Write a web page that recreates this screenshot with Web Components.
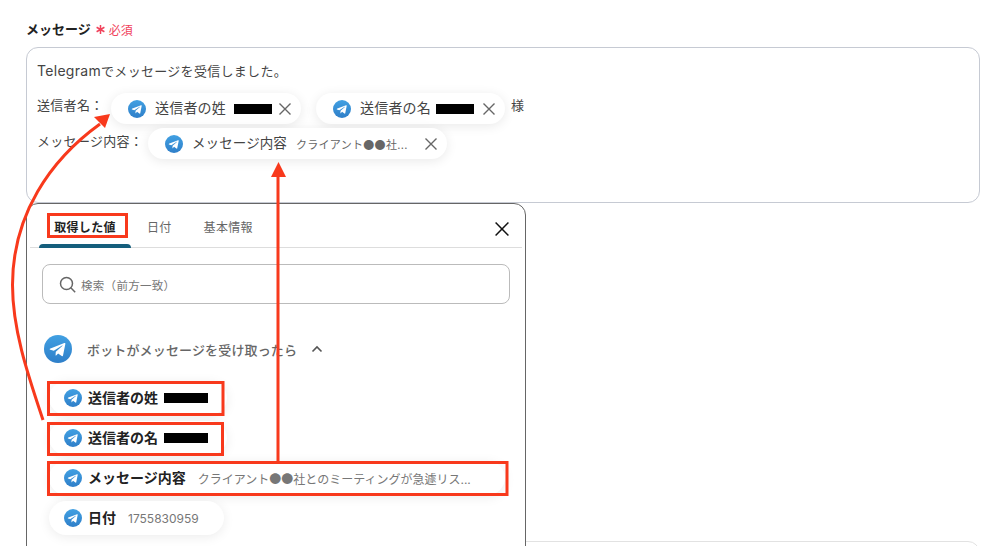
<!DOCTYPE html>
<html lang="ja">
<head>
<meta charset="utf-8">
<title>メッセージ</title>
<style>
  html, body { margin: 0; height: 546px; overflow: hidden; background: #fff; }
  body { font-family: Inter, "Noto Sans CJK JP", sans-serif; color: #333; }
</style>
</head>
<body>
<message-form></message-form>
<script>
const FONT = `Inter, "Noto Sans CJK JP", sans-serif`;

class TgIcon extends HTMLElement {
  constructor() {
    super();
    const size = this.getAttribute('size') || 18;
    const id = 'g' + Math.random().toString(36).slice(2, 8);
    this.attachShadow({ mode: 'open' });
    this.shadowRoot.innerHTML = `
      <style>:host { display: block; width: ${size}px; height: ${size}px; flex: none; } svg { display: block; }</style>
      <svg width="${size}" height="${size}" viewBox="0 0 24 24">
        <defs><linearGradient id="${id}" x1="0" y1="0" x2="0" y2="1"><stop offset="0" stop-color="#41a0e2"/><stop offset="1" stop-color="#2f7fc9"/></linearGradient></defs>
        <circle cx="12" cy="12" r="12" fill="url(#${id})"/>
        <path d="M5 11.8l12.4-4.9c.6-.2 1.1.1.9.9l-2 9.8c-.1.7-.6.8-1.100.5l-3.100-2.300-1.500 1.500c-.2.2-.3.3-.7.3l.2-3.200 5.800-5.200c.3-.2-.1-.4-.4-.2l-7.100 4.500-3-.9c-.7-.2-.7-.7 .1-1z" fill="#fff"/>
      </svg>`;
  }
}

class CloseIcon extends HTMLElement {
  constructor() {
    super();
    const size = this.getAttribute('size') || 12;
    const color = this.getAttribute('color') || '#666';
    const w = this.getAttribute('stroke') || 1.4;
    this.attachShadow({ mode: 'open' });
    this.shadowRoot.innerHTML = `
      <style>:host { display: block; width: ${size}px; height: ${size}px; flex: none; } svg { display: block; }</style>
      <svg width="${size}" height="${size}" viewBox="0 0 12 12"><path d="M.5.5l11 11M11.500.5l-11 11" stroke="${color}" stroke-width="${w}" fill="none"/></svg>`;
  }
}

class RedactBar extends HTMLElement {
  constructor() {
    super();
    this.attachShadow({ mode: 'open' });
    this.shadowRoot.innerHTML = `<style>:host { display: block; flex: none; width: ${this.getAttribute('w') || 38}px; height: 10px; background: #000; }</style>`;
  }
}

// pill placed inside the message textarea
class VarPill extends HTMLElement {
  constructor() {
    super();
    this.attachShadow({ mode: 'open' });
    this.shadowRoot.innerHTML = `
      <style>
        :host { display: flex; align-items: center; height: 31px; box-sizing: border-box; background: #fff; border-radius: 16px;
          box-shadow: 0 2px 12px rgba(0,0,0,.09); padding: 0 10px 0 17px; font-size: 14px; color: #444; white-space: nowrap; letter-spacing: .2px; }
        .name { margin: 0 0 3px 9px; }
        .value { display: flex; align-items: center; flex: 1; font-size: 11px; color: #666; letter-spacing: .3px; }
      </style>
      <tg-icon></tg-icon>
      <span class="name"><slot></slot></span>
      <span class="value"><slot name="value"></slot></span>
      <close-icon></close-icon>`;
  }
}

// pill in the picker list
class OutPill extends HTMLElement {
  constructor() {
    super();
    this.attachShadow({ mode: 'open' });
    this.shadowRoot.innerHTML = `
      <style>
        :host { display: flex; align-items: center; height: 34px; box-sizing: border-box; background: #fff; border-radius: 17px;
          box-shadow: 0 2px 12px rgba(0,0,0,.08); padding: 0 15px; white-space: nowrap; }
        .name { margin: 0 0 2px 6px; font-size: 14px; font-weight: 700; color: #222; }
        .value { display: flex; align-items: center; font-size: 12px; color: #777; }
      </style>
      <tg-icon></tg-icon>
      <span class="name"><slot></slot></span>
      <span class="value"><slot name="value"></slot></span>`;
  }
}

class PickerPanel extends HTMLElement {
  constructor() {
    super();
    this.attachShadow({ mode: 'open' });
    this.shadowRoot.innerHTML = `
      <style>
        :host { display: block; position: absolute; left: 26px; top: 203px; width: 500px; height: 380px; box-sizing: border-box;
          background: #fff; border: 1px solid #666; border-radius: 12px; font-family: ${FONT}; }
        .tabs { display: flex; align-items: flex-end; height: 43px; margin: 0 3px; border-bottom: 1px solid #ddd; position: relative; font-size: 12px; color: #666; }
        .tab { height: 43px; box-sizing: border-box; padding-top: 14px; text-align: center; letter-spacing: .3px; }
        .tab.active { width: 92px; margin-left: 9px; color: #222; font-weight: 700; position: relative; }
        .tab.active::after { content: ""; position: absolute; left: 0; right: 0; bottom: -1px; height: 4px; background: #155e7c; border-radius: 4px 4px 0 0; }
        .tab.t2 { margin-left: 16px; }
        .tab.t3 { margin-left: 32px; }
        .x { position: absolute; right: 13px; top: 18px; }
        .search { display: flex; align-items: center; height: 40px; box-sizing: border-box; margin: 16px 15px 0 15px; border: 1px solid #bbb; border-radius: 8px; padding: 2px 0 0 16px; font-size: 11.500px; color: #777; letter-spacing: .3px; }
        .search svg { margin: -2px 5px 0 0; }
        .group { display: flex; align-items: center; margin: 31px 0 0 17px; font-size: 13px; font-weight: 500; color: #666; }
        .group .t { margin-left: 15px; letter-spacing: .15px; }
        .group svg { margin-left: 14px; }
        .list { display: flex; flex-direction: column; gap: 6px; margin: 18px 0 0 22px; }
      </style>
      <div class="tabs">
        <div class="tab active">取得した値</div>
        <div class="tab t2">日付</div>
        <div class="tab t3">基本情報</div>
        <close-icon class="x" size="14" color="#111" stroke="1.300"></close-icon>
      </div>
      <div class="search">
        <svg width="17" height="17" viewBox="0 0 17 17"><circle cx="7.500" cy="7.500" r="6" fill="none" stroke="#666" stroke-width="1.500"/><path d="M11.800 11.800l4.400 4.400" stroke="#666" stroke-width="1.500"/></svg>
        検索（前方一致）
      </div>
      <div class="group">
        <tg-icon size="28"></tg-icon>
        <span class="t">ボットがメッセージを受け取ったら</span>
        <svg width="12" height="8" viewBox="0 0 12 8"><path d="M1.500 6.500L6 2l4.500 4.500" fill="none" stroke="#555" stroke-width="1.600"/></svg>
      </div>
      <div class="list"><slot></slot></div>`;
  }
}

class MessageField extends HTMLElement {
  constructor() {
    super();
    this.attachShadow({ mode: 'open' });
    this.shadowRoot.innerHTML = `
      <style>
        :host { display: block; font-family: ${FONT}; }
        .label { display: flex; align-items: center; height: 18px; font-size: 13px; font-weight: 700; color: #222; }
        .req { margin-left: 5px; font-size: 12px; font-weight: 400; color: #f0435c; display: flex; align-items: center; padding-top: 3px; }
        .req svg { margin-right: 4px; }
        .box { margin-top: 10px; height: 156px; box-sizing: border-box; border: 1px solid #c6cad3; border-radius: 12px; padding: 12px 10px; font-size: 13px; color: #444; letter-spacing: .3px; }
        .row { display: flex; align-items: center; }
        .r1 { height: 20px; }
        .r1 b { font-weight: 400; font-size: 14px; }
        .r2 { margin-top: 13px; height: 31px; }
        .r3 { margin-top: 4px; height: 31px; }
      </style>
      <div class="label">メッセージ<span class="req">
        <svg width="9" height="9" viewBox="0 0 9 9"><path d="M4.500 0v9M.6 2.250l7.800 4.500M8.400 2.250l-7.800 4.500" stroke="#f0435c" stroke-width="1.500" fill="none"/></svg>必須</span></div>
      <div class="box">
        <div class="row r1"><span><b>Telegram</b>でメッセージを受信しました。</span></div>
        <div class="row r2"><slot name="r2"></slot></div>
        <div class="row r3"><slot name="r3"></slot></div>
      </div>`;
  }
}

class NextField extends HTMLElement {
  constructor() {
    super();
    this.attachShadow({ mode: 'open' });
    this.shadowRoot.innerHTML = `<style>:host { display: block; height: 60px; margin-top: 338px; border: 1px solid #e2e2e2; border-radius: 12px; box-sizing: border-box; }</style>`;
  }
}

class MessageForm extends HTMLElement {
  constructor() {
    super();
    this.attachShadow({ mode: 'open' });
    this.shadowRoot.innerHTML = `
      <style>
        :host { display: block; position: relative; height: 546px; box-sizing: border-box; padding: 19px 20px 0 26px; overflow: hidden; }
        .inline { flex: none; white-space: nowrap; margin-bottom: 9px; }
        .marks { position: absolute; left: 0; top: 0; pointer-events: none; }
        .dot { font-family: "Noto Sans CJK JP", sans-serif; }
      </style>
      <message-field>
        <span slot="r2" class="inline" style="width:74px">送信者名：</span>
        <var-pill slot="r2" style="width:190px">送信者の姓<redact-bar slot="value" style="margin-left:8px"></redact-bar></var-pill>
        <var-pill slot="r2" style="width:189px;margin-left:15px">送信者の名<redact-bar slot="value" style="margin-left:5px"></redact-bar></var-pill>
        <span slot="r2" class="inline" style="margin-left:6px">様</span>
        <span slot="r3" class="inline" style="width:111px;margin-bottom:6px">メッセージ内容：</span>
        <var-pill slot="r3" style="width:299px;font-size:13.500px;letter-spacing:.1px">メッセージ内容<span slot="value" style="margin-left:9px">クライアント<span class="dot">●●</span>社...</span></var-pill>
      </message-field>
      <next-field></next-field>
      <picker-panel>
        <out-pill style="width:178px">送信者の姓<redact-bar slot="value" w="44" style="margin-left:6px"></redact-bar></out-pill>
        <out-pill style="width:178px">送信者の名<redact-bar slot="value" w="44" style="margin-left:6px"></redact-bar></out-pill>
        <out-pill style="width:456px">メッセージ内容<span slot="value" style="margin-left:12px">クライアント<span class="dot">●●</span>社とのミーティングが急遽リス...</span></out-pill>
        <out-pill style="width:175px">日付<span slot="value" style="margin-left:12px">1755830959</span></out-pill>
      </picker-panel>
      <svg class="marks" width="1000" height="546" viewBox="0 0 1000 546" fill="none" stroke="#f8391c" stroke-width="3">
        <rect x="48.500" y="214.500" width="78" height="22"/>
        <rect x="48.500" y="382.500" width="174.500" height="32"/>
        <rect x="48.500" y="423.500" width="174" height="31"/>
        <rect x="48.500" y="462.500" width="458.500" height="32"/>
        <path d="M43 420C28 375 12.500 330 12.500 285C12.500 215 50 160 100 124" stroke-width="3"/>
        <path d="M110 114L94 117L105 128Z" fill="#f8391c" stroke="none"/>
        <path d="M278 461V174"/>
        <path d="M278.500 162L271 177H286Z" fill="#f8391c" stroke="none"/>
      </svg>`;
  }
}

customElements.define('tg-icon', TgIcon);
customElements.define('close-icon', CloseIcon);
customElements.define('redact-bar', RedactBar);
customElements.define('var-pill', VarPill);
customElements.define('out-pill', OutPill);
customElements.define('picker-panel', PickerPanel);
customElements.define('message-field', MessageField);
customElements.define('next-field', NextField);
customElements.define('message-form', MessageForm);
</script>
</body>
</html>
